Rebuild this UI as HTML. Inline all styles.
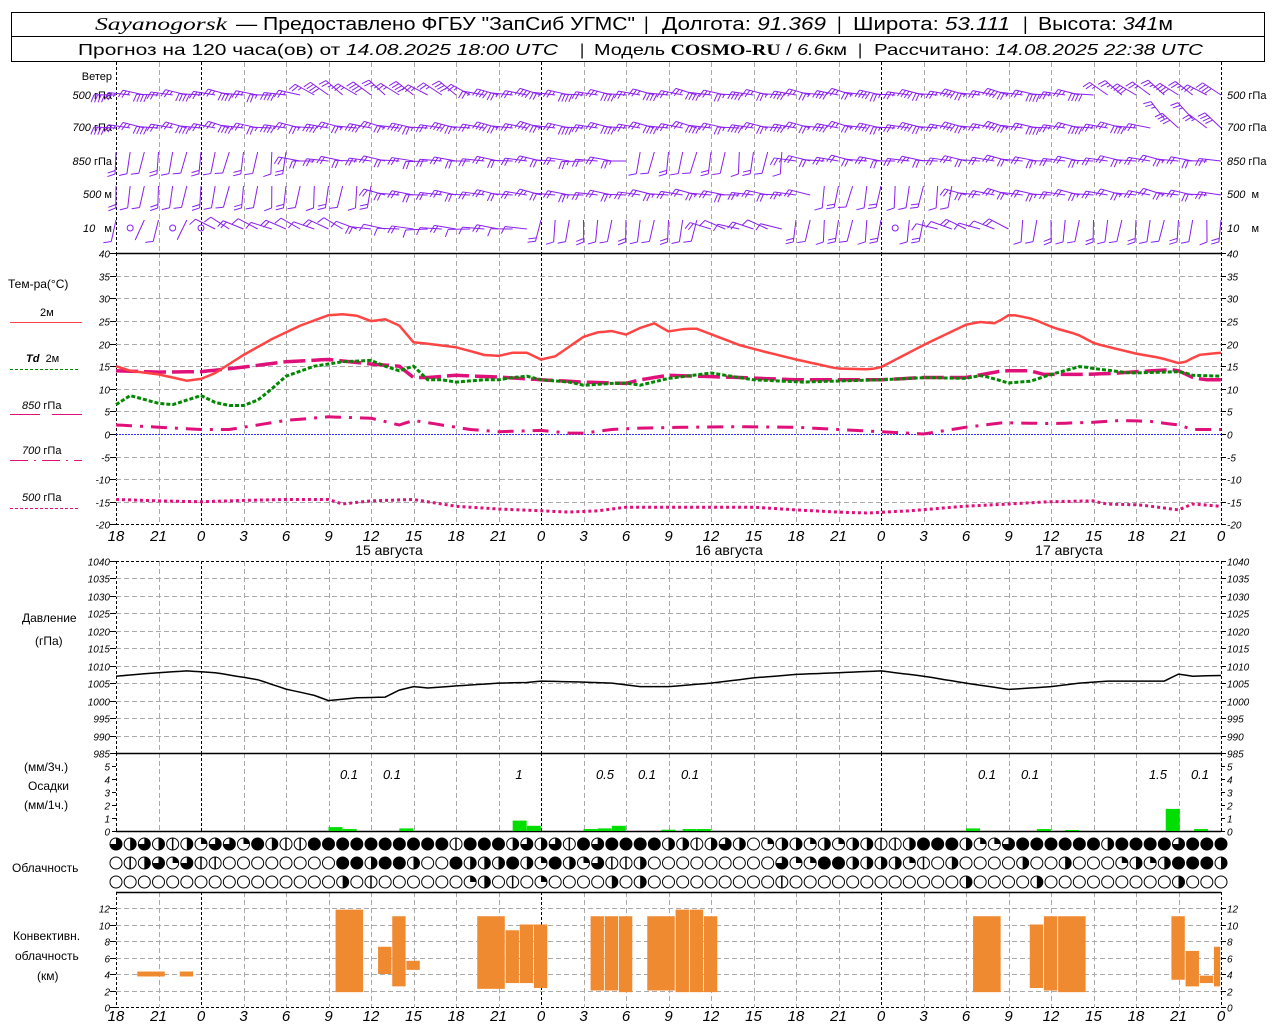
<!DOCTYPE html>
<html><head><meta charset="utf-8">
<style>
html,body{margin:0;padding:0;background:#fff;}
svg{display:block;font-family:"Liberation Sans","DejaVu Sans",sans-serif;}
.t{font-size:11px;fill:#000}
.n{font-size:10px;font-style:italic;fill:#000}
.h{font-size:15px;font-style:italic;fill:#000}
.l{font-size:12px;fill:#000}
</style></head><body>
<svg id="s" width="1280" height="1024" viewBox="0 0 1280 1024" xmlns="http://www.w3.org/2000/svg">
<rect x="0" y="0" width="1280" height="1024" fill="#fff"/>
<rect x="11.5" y="12.5" width="1253" height="49" fill="none" stroke="#000"/>
<line x1="11" y1="36.5" x2="1265" y2="36.5" stroke="#000"/>
<g font-size="18" fill="#000">
<text x="95" y="30" textLength="132" lengthAdjust="spacingAndGlyphs" font-family="Liberation Serif,serif" font-style="italic">Sayanogorsk</text>
<text x="236" y="30" textLength="399" lengthAdjust="spacingAndGlyphs">— Предоставлено ФГБУ "ЗапСиб УГМС"</text>
<text x="644" y="30">|</text>
<text x="662" y="30" textLength="164" lengthAdjust="spacingAndGlyphs">Долгота: <tspan font-style="italic">91.369</tspan></text>
<text x="837" y="30">|</text>
<text x="853" y="30" textLength="157" lengthAdjust="spacingAndGlyphs">Широта: <tspan font-style="italic">53.111</tspan></text>
<text x="1023" y="30">|</text>
<text x="1038" y="30" textLength="135" lengthAdjust="spacingAndGlyphs">Высота: <tspan font-style="italic">341</tspan>м</text>
</g>
<g font-size="16" fill="#000">
<text x="78" y="55" textLength="480" lengthAdjust="spacingAndGlyphs">Прогноз на 120 часа(ов) от <tspan font-style="italic">14.08.2025 18:00 UTC</tspan></text>
<text x="580" y="55">|</text>
<text x="594" y="55" textLength="253" lengthAdjust="spacingAndGlyphs">Модель <tspan font-family="Liberation Serif,serif" font-weight="bold">COSMO-RU</tspan> / <tspan font-style="italic">6.6</tspan>км</text>
<text x="858" y="55">|</text>
<text x="874" y="55" textLength="329" lengthAdjust="spacingAndGlyphs">Рассчитано: <tspan font-style="italic">14.08.2025 22:38 UTC</tspan></text>
</g>
<text class="t" x="112" y="80" text-anchor="end">Ветер</text>
<text class="t" x="112" y="99" text-anchor="end"><tspan font-style="italic">500</tspan> гПа</text>
<text class="t" x="112" y="131" text-anchor="end"><tspan font-style="italic">700</tspan> гПа</text>
<text class="t" x="112" y="165" text-anchor="end"><tspan font-style="italic">850</tspan> гПа</text>
<text class="t" x="112" y="198" text-anchor="end"><tspan font-style="italic">500</tspan> м</text>
<text class="t" x="112" y="232" text-anchor="end"><tspan font-style="italic">10</tspan>&#160;&#160;&#160;м</text>
<text class="t" x="1227" y="99"><tspan font-style="italic">500</tspan> гПа</text>
<text class="t" x="1227" y="131"><tspan font-style="italic">700</tspan> гПа</text>
<text class="t" x="1227" y="165"><tspan font-style="italic">850</tspan> гПа</text>
<text class="t" x="1227" y="198"><tspan font-style="italic">500</tspan>&#160;&#160;м</text>
<text class="t" x="1227" y="232"><tspan font-style="italic">10</tspan>&#160;&#160;&#160;&#160;м</text>

<text class="l" x="8" y="288">Тем-ра(°C)</text>
<text class="t" x="40" y="316">2м</text>
<line x1="10" y1="322.5" x2="82" y2="322.5" stroke="#f44" stroke-width="1"/>
<text class="t" x="26" y="362"><tspan font-style="italic" font-weight="bold">Td</tspan>&#160;&#160;2м</text>
<line x1="10" y1="369.5" x2="78" y2="369.5" stroke="#080" stroke-dasharray="3,2"/>
<text class="t" x="22" y="409"><tspan font-style="italic">850</tspan> гПа</text>
<line x1="10" y1="414.5" x2="40" y2="414.5" stroke="#e0107a"/><line x1="52" y1="414.5" x2="82" y2="414.5" stroke="#e0107a"/>
<text class="t" x="22" y="454"><tspan font-style="italic">700</tspan> гПа</text>
<line x1="10" y1="460.5" x2="82" y2="460.5" stroke="#e0107a" stroke-dasharray="18,6,2,6"/>
<text class="t" x="22" y="501"><tspan font-style="italic">500</tspan> гПа</text>
<line x1="10" y1="508.5" x2="78" y2="508.5" stroke="#e0107a" stroke-dasharray="3,2"/>

<text class="l" x="22" y="622">Давление</text>
<text class="l" x="35" y="645">(гПа)</text>
<text class="l" x="24" y="771">(мм/3ч.)</text>
<text class="l" x="28" y="790">Осадки</text>
<text class="l" x="24" y="809">(мм/1ч.)</text>
<text class="l" x="12" y="872">Облачность</text>
<text class="l" x="13" y="940">Конвективн.</text>
<text class="l" x="15" y="960">облачность</text>
<text class="l" x="37" y="980">(км)</text>

<g id="g"></g>

<text x="389" y="555" text-anchor="middle" font-size="14" fill="#000">15 августа</text>
<text x="729" y="555" text-anchor="middle" font-size="14" fill="#000">16 августа</text>
<text x="1069" y="555" text-anchor="middle" font-size="14" fill="#000">17 августа</text>

<g text-anchor="middle" font-size="13" font-style="italic" fill="#000">
<text x="349" y="779">0.1</text><text x="392" y="779">0.1</text><text x="519" y="779">1</text>
<text x="605" y="779">0.5</text><text x="647" y="779">0.1</text><text x="690" y="779">0.1</text>
<text x="987" y="779">0.1</text><text x="1030" y="779">0.1</text><text x="1158" y="779">1.5</text><text x="1200" y="779">0.1</text>
</g>
<g id="lab"></g>
</svg>
<script>
var NS="http://www.w3.org/2000/svg",G=document.getElementById('g'),LB=document.getElementById('lab');
function X(h){return 116+h*1105/78;}
function el(t,a,p){var e=document.createElementNS(NS,t);for(var k in a)e.setAttribute(k,a[k]);(p||G).appendChild(e);return e;}
function line(x1,y1,x2,y2,s,w,d){var a={x1:x1,y1:y1,x2:x2,y2:y2,stroke:s,'stroke-width':w||1};if(d)a['stroke-dasharray']=d;return el('line',a);}
function txt(x,y,s,cls,anc){var e=el('text',{x:x,y:y,'class':cls,'text-anchor':anc||'start'},LB);e.textContent=s;}
var panels=[[62,253],[253,524],[561,753],[753,831],[892,1007]];
for(var k=0;k<=26;k++){var x=Math.round(X(k*3))+0.5;var mid=(k==2||k==10||k==18);var blk=mid||k==0||k==26;
 panels.forEach(function(p){line(x,p[0],x,p[1],blk?'#000':'#aaa',1,blk?'3,2':'5,3');});}
function TY(t){return 434-t*4.517;}
for(var t=-20;t<=40;t+=5){var y=Math.round(TY(t))+0.5;
 if(t!=40&&t!=0&&t!=-20)line(116,y,1221,y,'#aaa',1,'5,3');
 line(110,y,116,y,'#000');line(1221,y,1226,y,'#000');
 txt(110,y+4,''+t,'n','end');txt(1227,y+4,''+t,'n');}
line(116,253.5,1221,253.5,'#000',1.5);line(116,524.5,1221,524.5,'#000',1,'3,2');
line(116,434.5,1221,434.5,'#33f',1,'2,1');
function PY(p){return 561+(1040-p)*3.49;}
for(var p=985;p<=1040;p+=5){var y=Math.round(PY(p))+0.5;
 if(p!=1040&&p!=985)line(116,y,1221,y,'#aaa',1,'5,3');
 line(110,y,116,y,'#000');line(1221,y,1226,y,'#000');
 txt(110,y+4,''+p,'n','end');txt(1227,y+4,''+p,'n');}
line(116,561.5,1221,561.5,'#000',1,'3,2');line(116,753.5,1221,753.5,'#000',1.5);
for(var m=0;m<=5;m++){var y=Math.round(831-m*13)+0.5;line(112,y,116,y,'#000');line(1221,y,1225,y,'#000');
 txt(110,y+4,''+m,'n','end');txt(1227,y+4,''+m,'n');}
line(116,831.5,1221,831.5,'#000',1.5);
function CY(k){return 1007-k*8.25;}
line(116,892.5,1221,892.5,'#000',1.5);
for(var c=0;c<=12;c+=2){var y=Math.round(CY(c))+0.5;if(c>0)line(116,y,1221,y,'#aaa',1,'5,3');
 line(110,y,116,y,'#000');line(1221,y,1226,y,'#000');
 txt(110,y+4,''+c,'n','end');txt(1227,y+4,''+c,'n');}
line(116,1007.5,1221,1007.5,'#000',1,'3,2');
var hl=[18,21,0,3,6,9,12,15,18,21,0,3,6,9,12,15,18,21,0,3,6,9,12,15,18,21,0];
for(var k=0;k<=26;k++){txt(X(k*3),541,''+hl[k],'h','middle');txt(X(k*3),1021,''+hl[k],'h','middle');}
function I(pts,h){for(var i=0;i<pts.length-1;i++){if(h>=pts[i][0]&&h<=pts[i+1][0]){var a=pts[i],b=pts[i+1];return a[1]+(b[1]-a[1])*(h-a[0])/(b[0]-a[0]);}}return pts[pts.length-1][1];}
function curve(pts,fy,col,w,d){var s='';for(var h=0;h<=78;h+=0.5){s+=(s?' L':'M')+X(h).toFixed(1)+','+fy(I(pts,h)).toFixed(1);}
 var a={d:s,fill:'none',stroke:col,'stroke-width':w};if(d)a['stroke-dasharray']=d;el('path',a);}
var T2=[[0,15],[1,14],[3,13.2],[5,11.8],[6,12.2],[7,13.5],[9,17.5],[11,21],[13,24],[15,26.3],[16,26.5],[17,26.2],[18,25],[19,25.4],[20,24],[21,20.3],[22,20],[24,19.2],[26,17.5],[27,17.3],[28,18],[29,18],[30,16.5],[31,17.2],[33,21.5],[34,22.5],[35,22.8],[36,22],[37,23.5],[38,24.5],[39,22.7],[40.2,23.3],[41,23.3],[44,19.7],[45.8,18.2],[48,16.5],[50.9,14.5],[53.2,14.3],[54,14.8],[57.2,20],[60,24.2],[61,24.8],[62.1,24.5],[63.1,26.5],[64.7,25.5],[66.2,23.5],[67.9,22],[69.1,20],[72,17.8],[73.8,16.8],[75.2,15.5],[76.4,17.5],[78,18]];
var TD=[[0,6.5],[1,8.5],[3,6.8],[4,6.5],[6,8.5],[7,7],[8,6.3],[9,6.3],[10,7.5],[11,10],[12,12.8],[14,15],[16,16],[18,16.3],[19,15],[20,14],[21,15],[22,12],[23,12],[24,11.5],[26,12],[27,12],[28,12.5],[29,12.8],[30,12],[32,11.5],[33,10.8],[35,11.2],[36,11.3],[37,10.8],[39,12.3],[42,13.5],[45,12],[48.5,11.5],[54,12],[57.2,12.5],[60,12.3],[61.1,13],[63,11.3],[64.6,11.7],[65.8,13],[68.1,15],[69,14.5],[71.6,13.5],[75.2,13.8],[76,13],[78,12.8]];
var T85=[[0,14],[3,13.7],[6,13.8],[9,14.8],[12,16],[15,16.5],[18,15.5],[20,15],[21,12.5],[22,12.5],[24,13],[27,12.6],[30,12],[33,11.5],[36,11.2],[37,12],[39,13],[44,12.5],[48,12],[54,12],[57,12.5],[60,12.5],[62.6,14],[64.6,14],[65.4,13.2],[67.5,13.2],[68.3,13.2],[70.3,13.4],[72,13.8],[74.8,14.3],[76,12.5],[76.9,12],[78,12]];
var T70=[[0,2],[3,1.5],[6,1],[8,1],[10,2],[12,3],[15,3.8],[18,3.5],[20,2],[21,3],[23,2],[25,1],[27,0.5],[30,0.8],[32,0.2],[33,0.2],[35,1],[37,1.3],[40,1.5],[44,1.6],[48,1.5],[51,1],[54,0.5],[57,0],[60,1.5],[62.6,2.5],[66,2.3],[69,2.6],[71,3],[73,2.8],[75,2],[76,1],[78,1]];
var T50=[[0,-14.5],[3,-14.8],[6,-15],[9,-14.7],[12,-14.5],[15,-14.5],[16,-15.5],[18,-14.8],[21,-14.5],[24,-16],[27,-16.6],[30,-17],[32,-17.3],[34,-17],[36,-16.2],[42,-16.2],[45,-16.2],[48,-16.8],[51,-17.3],[53,-17.5],[56,-17],[59.9,-16],[63,-15.5],[65.8,-15],[69,-14.8],[69.8,-15.5],[72.3,-15.7],[75,-16.8],[76,-15.5],[78,-16]];
curve(T50,TY,'#e0107a',3,'3,3');
curve(T70,TY,'#e0107a',3,'16,8,3,8');
curve(T85,TY,'#e0107a',3.5,'22,6');
curve(TD,TY,'#080',3,'4,2');
curve(T2,TY,'#f44',2.5);
var PR=[[0,1007],[3,1008],[5,1008.5],[7,1008],[10,1006],[12,1003.3],[14,1001.5],[15,1000],[17,1000.8],[19,1001],[20,1003],[21,1004],[22,1003.6],[24,1004.2],[27,1005],[29,1005.2],[30,1005.6],[33,1005.3],[35,1005],[37,1004],[39,1004],[42,1005],[45,1006.5],[48,1007.5],[51,1008],[54,1008.5],[57,1007],[60,1005],[63,1003.2],[66,1004],[68,1005],[70,1005.6],[74,1005.6],[75,1007.6],[76,1007],[78,1007.2]];
curve(PR,PY,'#000',1.5);
[[15,0.3],[16,0.15],[20,0.2],[28,0.8],[29,0.4],[33,0.15],[34,0.2],[35,0.4],[38.5,0.1],[40,0.15],[41,0.15],[60,0.2],[65,0.15],[67,0.08],[74.1,1.7],[76.1,0.15]].forEach(function(b){
 var y=831-b[1]*13;el('rect',{x:X(b[0]),y:y,width:14,height:831-y,fill:'#00dd00'});});
[[1.5,3.5,3.7,4.3],[4.5,5.5,3.7,4.3],[15.5,17.5,1.8,11.8],[18.5,19.5,4,7.3],[19.5,20.5,2.5,11],[20.5,21.5,4.5,5.6],[25.5,27.5,2.2,11],[27.5,28.5,2.9,9.3],[28.5,29.5,2.9,10],[29.5,30.5,2.3,10],
[33.5,34.5,2,11],[34.5,35.5,2,11],[35.5,36.5,1.8,11],[37.5,39.5,2,11],[39.5,40.5,1.8,11.8],[40.5,41.5,1.8,11.8],[41.5,42.5,1.8,11],
[60.5,62.5,1.8,11],[64.5,65.5,2.3,10],[65.5,66.5,2,11],[66.5,68.5,1.8,11],[74.5,75.5,3.3,11],[75.5,76.5,2.5,6.8],[76.5,77.5,2.9,3.8],[77.5,78,2.5,7.3]].forEach(function(b){
 el('rect',{x:X(b[0]),y:CY(b[3]),width:X(b[1])-X(b[0])-0.8,height:CY(b[2])-CY(b[3]),fill:'#f08a30'});});
var R1="3232v2133142vv4444444444v4442323v4344"+"4422v232012212122vv24442113444444244443";
var R2="0v2313vv00000000442442004222421421"+"3vv"+"2000000000"+"3114422221v02"+"0000"+"200200"+"012124442";
var R3="000000000000000020v000000120v0100002"+"02000000000v000000000000200002000000000200";
function circ(cx,cy,c){var r=6;el('circle',{cx:cx,cy:cy,r:r,fill:'#fff',stroke:'#000','stroke-width':1});
 if(c=='4'){el('circle',{cx:cx,cy:cy,r:r,fill:'#000'});}
 else if(c=='2'){el('path',{d:'M'+cx+','+(cy-r)+' A'+r+','+r+' 0 0,1 '+cx+','+(cy+r)+' Z',fill:'#000'});}
 else if(c=='1'){el('path',{d:'M'+cx+','+cy+' L'+cx+','+(cy-r)+' A'+r+','+r+' 0 0,1 '+(cx+r)+','+cy+' Z',fill:'#000'});}
 else if(c=='3'){el('path',{d:'M'+cx+','+cy+' L'+cx+','+(cy-r)+' A'+r+','+r+' 0 1,1 '+(cx-r)+','+cy+' Z',fill:'#000'});}
 else if(c=='v'){line(cx,cy-r,cx,cy+r,'#000',1.5);}}
for(var h=0;h<=78;h++){var cx=X(h);circ(cx,844,R1[h]||'4');circ(cx,863,R2[h]||'0');circ(cx,882,R3[h]||'0');}
var WC='#8a1ef0';
function barb(x,y,ang,n,L){var a=ang*Math.PI/180,dx=Math.cos(a),dy=Math.sin(a);
 var horiz=Math.abs(dx)>0.7;
 var sx=x,sy=horiz?y-2:y-11;
 var ex=sx+dx*L,ey=sy+dy*L;line(sx,sy,ex,ey,WC,1);
 var f1x=Math.cos(a-1.2),f1y=Math.sin(a-1.2),f2x=Math.cos(a+1.2),f2y=Math.sin(a+1.2);
 var fx,fy;if(horiz){if(f1y>0){fx=f1x;fy=f1y;}else{fx=f2x;fy=f2y;}}else{if(f1x<0){fx=f1x;fy=f1y;}else{fx=f2x;fy=f2y;}}
 for(var i=0;i<n;i++){var px=ex-dx*i*3.5,py=ey-dy*i*3.5;var fl=(i==n-1&&n>1&&n%2)?4:8;
  line(px,py,px+fx*fl,py+fy*fl,WC,1);}}
function seg(h,arr){for(var i=0;i<arr.length;i++)if(h<arr[i][0])return arr[i];return arr[arr.length-1];}
var lev=[
 [97,[[14,188,3],[26,215,3],[70,190,3],[79,215,3]]],
 [130,[[74,190,3],[79,225,3]]],
 [163,[[13,100,1],[37,186,2],[48,100,1],[79,188,2]]],
 [197,[[19,98,1],[50,188,2],[60,100,1],[79,190,2]]],
 [231,[[6,110,0],[18,205,1],[30,185,1],[42,97,1],[48,200,1],[58,97,1],[64,200,1],[79,97,1]]]];
lev.forEach(function(L,li){for(var h=0;h<=78;h++){var s=seg(h,L[1]);var x=X(h),y=L[0];
 if(li==4&&(h==1||h==4||h==6||h==55)){el('circle',{cx:x,cy:y-3,r:3,fill:'none',stroke:WC});continue;}
 var ang=s[1]+((h*37)%11-5)*1.5;
 barb(x,y,ang,s[2]+(h%3==0?1:0),22);}});
</script>
</body></html>
